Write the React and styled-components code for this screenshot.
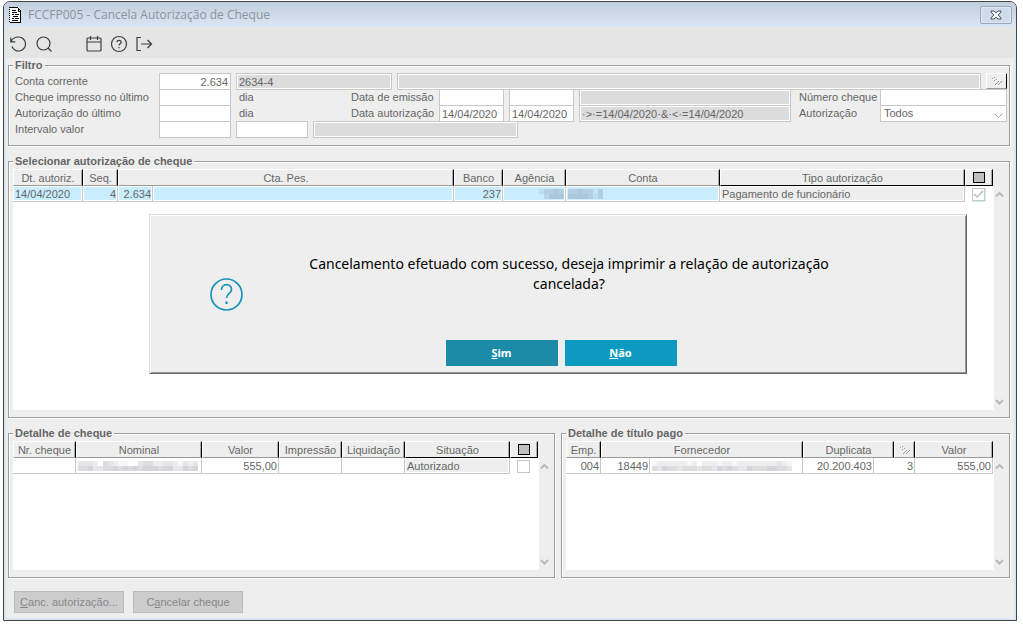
import React from "react";
import styled, { createGlobalStyle } from "styled-components";

const GlobalStyle = createGlobalStyle`
  * {
    box-sizing: border-box;
  }
  body {
    margin: 0;
    background: #fff;
    color: #666;
    font: 11px/13px "Liberation Sans", Arial, sans-serif;
  }
  button, input, select {
    font: inherit;
    color: inherit;
  }
`;

const Page = styled.div`
  padding: 1px 6px 7px 3px;
`;

const Window = styled.main`
  position: relative;
  border: 1px solid #444;
  border-radius: 7px 7px 0 0;
  background: #dae6f2;
  padding-bottom: 2px;
  overflow: hidden;
`;

const TitleBar = styled.header`
  display: flex;
  align-items: center;
  height: 25px;
  padding: 0 4px 0 5px;
  background: linear-gradient(#c0cddb, #dae6f3);
`;

const Title = styled.h1`
  flex: 1;
  margin: 0 0 0 6px;
  color: #8d949c;
  font: 12px/16px "Open Sans", "Segoe UI", sans-serif;
`;

const CloseButton = styled.button`
  display: flex;
  align-items: center;
  justify-content: center;
  width: 32px;
  height: 18px;
  padding: 0;
  border: 1px solid #9ba8b8;
  border-radius: 2px;
  background: #cfdbe8;
  box-shadow: inset 0 0 0 1px #dfe8f2;
`;

const Toolbar = styled.nav`
  display: flex;
  align-items: center;
  gap: 7px;
  height: 31px;
  margin: 0 2px;
  padding: 3px 4px 0;
  background: #e5e5e5;
`;

const ToolButton = styled.button`
  display: flex;
  width: 18px;
  height: 18px;
  padding: 0;
  border: 0;
  background: none;
  color: #3c3c3c;
`;

const ToolGap = styled.span`
  width: 18px;
`;

const Body = styled.div`
  margin: 0 2px;
  padding: 1px 4px 5px 2px;
  background: #eee;
`;

const Group = styled.fieldset`
  min-width: 0;
  margin: 0 0 ${(p) => p.$after || "0"};
  padding: ${(p) => p.$pad};
  border: 1px solid #9c9c9c;
  box-shadow: 1px 1px 0 #fff, inset 1px 1px 0 #fff;
`;

const Legend = styled.legend`
  padding: 0 2px;
  background: #eee;
  font-weight: bold;
  line-height: 13px;
`;

const FilterRow = styled.div`
  display: flex;
  gap: 5px;
  height: 16px;
`;

const Label = styled.label`
  flex: none;
  width: ${(p) => p.$w};
  margin-right: -5px;
  padding-left: ${(p) => p.$indent || "0"};
  line-height: 17px;
  white-space: nowrap;
`;

const Unit = styled.span`
  flex: none;
  width: 110px;
  padding-left: 3px;
  line-height: 17px;
`;

const Field = styled.input`
  flex: ${(p) => (p.$w ? "none" : "1")};
  width: ${(p) => p.$w || "0"};
  min-width: 0;
  height: 17px;
  padding: 1px 2px 0;
  border: 1px solid #c8c8c8;
  border-radius: 0;
  outline: 0;
  background: ${(p) => (p.readOnly ? "#dcdcdc" : "#fff")};
  box-shadow: ${(p) => (p.readOnly ? "inset 0 0 0 1px #fff" : "none")};
  text-align: ${(p) => p.$align || "left"};
`;

const SelectWrap = styled.span`
  position: relative;
  flex: none;
  width: 127px;
  height: 17px;

  svg {
    position: absolute;
    right: 4px;
    top: 8px;
    pointer-events: none;
  }
`;

const Select = styled.select`
  width: 100%;
  height: 17px;
  padding: 0 3px;
  border: 1px solid #c8c8c8;
  border-radius: 0;
  appearance: none;
  background: #fff;
`;

const BrushButton = styled.button`
  flex: none;
  display: flex;
  align-items: center;
  justify-content: center;
  width: 21px;
  height: 16px;
  padding: 0;
  border: 1px solid;
  border-color: #fff #000 #999 #fff;
  background: #eee;
`;

const Grid = styled.div`
  display: flex;
  min-height: ${(p) => p.$h};
`;

const Sheet = styled.div`
  flex: 1;
  min-width: 0;
  padding-right: 1px;
  background: linear-gradient(#eee 17px, #fff 17px);
`;

const Table = styled.table`
  width: 100%;
  table-layout: fixed;
  border-collapse: separate;
  border-spacing: 0;
`;

const Th = styled.th`
  height: 17px;
  padding: 1px 0 0;
  border: 1px solid;
  border-color: #fff #000 ${(p) => (p.$dark ? "#000" : "#999")} #fff;
  background: #eee;
  box-shadow: inset -1px 0 0 #aaa;
  font-weight: normal;
  line-height: 14px;
  text-align: center;
  white-space: nowrap;

  svg {
    display: block;
    margin: 0 auto;
  }
`;

const tones = {
  plain: "#fff",
  selected: "#c8eefe",
  locked: "#eee",
};

const Td = styled.td`
  height: 16px;
  padding: 0 1px 0 2px;
  border-right: 1px solid #c8c8c8;
  border-bottom: 1px solid #c8c8c8;
  background: ${(p) => tones[p.$tone || "plain"]};
  box-shadow: inset 0 0 0 1px #fff;
  line-height: 14px;
  text-align: ${(p) => p.$align || "left"};
  white-space: nowrap;

  svg {
    display: block;
    margin-left: ${(p) => (p.$align === "right" ? "auto" : "0")};
  }
`;

const CheckCell = styled.td`
  padding: 0 2px 0 0;
  line-height: 0;
  text-align: center;
`;

const Check = styled.input`
  width: 13px;
  height: 13px;
  margin: 0;
  border: 1px solid #c8c8c8;
  appearance: none;
  background: #fff;
  vertical-align: top;

  &:checked {
    background: #fff
      url("data:image/svg+xml,%3Csvg xmlns='http://www.w3.org/2000/svg' width='11' height='11' fill='none' stroke='%23bbb' stroke-width='1.5'%3E%3Cpath d='M1 5l3 3 6-6'/%3E%3C/svg%3E");
    box-shadow: 0 1px 0 #c8eefe, 1px 0 0 #c8eefe;
  }
`;

const ScrollTrack = styled.div`
  display: flex;
  flex: none;
  flex-direction: column;
  justify-content: space-between;
  width: 12px;
  padding: 22px 1px 4px;
`;

const Details = styled.div`
  display: grid;
  grid-template-columns: 547fr 449fr;
  gap: 6px;
`;

const Footer = styled.footer`
  display: flex;
  gap: 9px;
  padding: 13px 6px 0;
`;

const FooterButton = styled.button`
  width: 110px;
  height: 22px;
  padding: 0;
  border: 1px solid #bbb;
  background: #ccc;
  color: #888;
`;

const Dialog = styled.section`
  position: absolute;
  top: 212px;
  left: 145px;
  right: 49px;
  min-height: 160px;
  border: 1px solid;
  border-color: #ddd #666 #666 #ddd;
  background: #eee;
  box-shadow: inset 1px 1px 0 #fff, inset -1px -1px 0 #999;
`;

const DialogBody = styled.div`
  display: grid;
  grid-template-columns: 153px 1fr;
  min-height: 125px;
  padding-right: 131px;

  svg {
    margin: 63px auto 0;
  }
`;

const Message = styled.p`
  margin: 39px 0 0;
  color: #000;
  font: 14px/20px "Noto Sans", "Segoe UI", sans-serif;
  text-align: center;
`;

const DialogActions = styled.div`
  display: flex;
  justify-content: center;
  gap: 7px;
  padding-left: 6px;
`;

const DialogButton = styled.button`
  width: 112px;
  height: 26px;
  padding: 0;
  border: 0;
  background: ${(p) => (p.$primary ? "#1c8ba8" : "#0d9ac0")};
  color: #fff;
  font: bold 11px/16px "Noto Sans", "Segoe UI", sans-serif;
`;

const ToolIcon = ({ children }) => (
  <svg width="18" height="18" viewBox="0 0 18 18" fill="none" stroke="currentColor" strokeWidth="1.2">
    {children}
  </svg>
);

const DocumentIcon = () => (
  <svg width="13" height="16" viewBox="0 0 13 16" shapeRendering="crispEdges">
    <path d="M1 0h8l3 3v12H1z" fill="#fff" />
    <path d="M0 0h1v1H0zM0 2h1v1H0zM0 4h1v1H0zM0 6h1v1H0zM0 8h1v1H0zM0 10h1v1H0zM0 12h1v1H0zM0 14h1v1H0zM1 0h8v1H1zM9 1h1v3H9zM10 2h1v1h-1zM11 3h1v12h-1zM1 15h11v1H1zM9 4h3v1H9z" fill="#000" />
    <path d="M3 3h4v1H3zM3 5h5v1H3zM3 7h2v1H3zM6 7h4v1H6zM4 9h5v1H4zM3 11h2v1H3zM6 11h4v1H6zM3 13h6v1H3z" fill="#000" />
  </svg>
);

const CloseIcon = () => (
  <svg width="12" height="10" viewBox="0 0 12 10">
    <path d="M1 1h3l2 1.800L8 1h3v1L8.200 5 11 8v1H8L6 7.200 4 9H1V8l2.800-3L1 2z" fill="#f4f7fa" stroke="#4a5058" />
  </svg>
);

const BrushIcon = () => (
  <svg width="10" height="9" viewBox="0 0 10 9" shapeRendering="crispEdges">
    <path d="M0 1h1v1H0zM2 0h1v1H2zM2 3h1v1H2zM4 2h1v1H4zM6 4h1v1H6zM5 5h1v1H5zM4 6h1v1H4zM3 7h1v1H3zM9 4h1v1H9zM8 5h1v1H8zM7 6h1v1H7zM6 7h1v1H6z" fill="#999" />
  </svg>
);

const MarkIcon = () => (
  <svg width="13" height="12" viewBox="0 0 13 12" shapeRendering="crispEdges">
    <path d="M0 0h12v11H0z" fill="#000" />
    <path d="M1 1h10v9H1z" fill="#c0c0c0" />
  </svg>
);

const Arrow = ({ down }) => (
  <svg width="9" height="7" viewBox="0 0 9 7" fill="none" stroke="#bbb" strokeWidth="2">
    <path d={down ? "M1 1l3.500 3.500L8 1" : "M1 5.500L4.500 2 8 5.500"} />
  </svg>
);

const QuestionIcon = () => (
  <svg width="33" height="33" viewBox="0 0 33 33" fill="none" stroke="#1593bb" strokeWidth="1.700">
    <circle cx="16.500" cy="16.500" r="15.500" />
    <path d="M11.500 12c0-3.300 2.200-5.300 5-5.300s5 1.900 5 4.700c0 4.300-5 4.200-5 8.600" />
    <path d="M16.500 23.500v2.500" strokeWidth="2.200" />
  </svg>
);

// two rows of grey blocks that hide a private value
const Mosaic = ({ rows, size = 5 }) => (
  <svg width={rows[0].length * size} height={rows.length * size} shapeRendering="crispEdges">
    {rows.map((row, y) =>
      row.split("").map((level, x) => (
        <rect
          key={`${x}-${y}`}
          x={x * size}
          y={y * size}
          width={size}
          height={size}
          fill="#556"
          fillOpacity={Number(level) / 20}
        />
      ))
    )}
  </svg>
);

const Scroll = () => (
  <ScrollTrack>
    <Arrow />
    <Arrow down />
  </ScrollTrack>
);

const Cols = ({ widths }) => (
  <colgroup>
    {widths.map((width, i) => (
      <col key={i} width={width} />
    ))}
  </colgroup>
);

const Filter = () => (
  <Group $pad="1px 2px 8px 4px" $after="9px">
    <Legend>Filtro</Legend>
    <FilterRow>
      <Label $w="146px" $indent="2px" htmlFor="conta">Conta corrente</Label>
      <Field $w="72px" $align="right" id="conta" defaultValue="2.634" />
      <Field $w="156px" readOnly aria-label="Número da conta" value="2634-4" />
      <Field readOnly aria-label="Descrição da conta" value="" />
      <BrushButton aria-label="Limpar"><BrushIcon /></BrushButton>
    </FilterRow>
    <FilterRow>
      <Label $w="146px" $indent="2px" htmlFor="impresso">Cheque impresso no último</Label>
      <Field $w="72px" id="impresso" />
      <Unit>dia</Unit>
      <Label $w="88px" htmlFor="emissao">Data de emissão</Label>
      <Field $w="65px" id="emissao" />
      <Field $w="65px" aria-label="Data de emissão final" />
      <Field readOnly aria-label="Critério de emissão" value="" />
      <Label $w="84px" $indent="3px" htmlFor="numero">Número cheque</Label>
      <Field $w="127px" id="numero" />
    </FilterRow>
    <FilterRow>
      <Label $w="146px" $indent="2px" htmlFor="ultimo">Autorização do último</Label>
      <Field $w="72px" id="ultimo" />
      <Unit>dia</Unit>
      <Label $w="88px" htmlFor="autorizacao">Data autorização</Label>
      <Field $w="65px" id="autorizacao" defaultValue="14/04/2020" />
      <Field $w="65px" aria-label="Data autorização final" defaultValue="14/04/2020" />
      <Field readOnly aria-label="Critério de autorização" value="·>·=14/04/2020·&·<·=14/04/2020" />
      <Label $w="84px" $indent="3px" htmlFor="tipo">Autorização</Label>
      <SelectWrap>
        <Select id="tipo"><option>Todos</option></Select>
        <svg width="9" height="6" viewBox="0 0 9 6" fill="none" stroke="#aaa">
          <path d="M0.500 0.500l4 4 4-4" />
        </svg>
      </SelectWrap>
    </FilterRow>
    <FilterRow>
      <Label $w="146px" $indent="2px" htmlFor="valor">Intervalo valor</Label>
      <Field $w="72px" id="valor" />
      <Field $w="72px" aria-label="Valor final" />
      <Field $w="205px" readOnly aria-label="Critério de valor" value="" />
    </FilterRow>
  </Group>
);

const Authorizations = () => (
  <Group $pad="1px 3px 7px 4px" $after="9px">
    <Legend>Selecionar autorização de cheque</Legend>
    <Grid $h="241px">
      <Sheet>
        <Table>
          <Cols widths={[70, 35, 35, undefined, 49, 63, 154, 245, 28]} />
          <thead>
            <tr>
              <Th>Dt. autoriz.</Th>
              <Th>Seq.</Th>
              <Th colSpan={2}>Cta. Pes.</Th>
              <Th>Banco</Th>
              <Th>Agência</Th>
              <Th>Conta</Th>
              <Th $dark>Tipo autorização</Th>
              <Th $dark aria-label="Marcar"><MarkIcon /></Th>
            </tr>
          </thead>
          <tbody>
            <tr>
              <Td $tone="selected">14/04/2020</Td>
              <Td $tone="selected" $align="right">4</Td>
              <Td $tone="selected" $align="right">2.634</Td>
              <Td $tone="selected" />
              <Td $tone="selected" $align="right">237</Td>
              <Td $tone="selected" $align="right"><Mosaic rows={["24454", "03555"]} /></Td>
              <Td $tone="selected"><Mosaic rows={["4454414", "5555424"]} /></Td>
              <Td $tone="locked">Pagamento de funcionário</Td>
              <CheckCell><Check type="checkbox" defaultChecked aria-label="Marcar autorização" /></CheckCell>
            </tr>
          </tbody>
        </Table>
      </Sheet>
      <Scroll />
    </Grid>
  </Group>
);

const ChequeDetail = () => (
  <Group $pad="1px 3px 7px 4px">
    <Legend>Detalhe de cheque</Legend>
    <Grid $h="129px">
      <Sheet>
        <Table>
          <Cols widths={[63, undefined, 77, 63, 63, 105, 28]} />
          <thead>
            <tr>
              <Th>Nr. cheque</Th>
              <Th>Nominal</Th>
              <Th>Valor</Th>
              <Th>Impressão</Th>
              <Th>Liquidação</Th>
              <Th $dark>Situação</Th>
              <Th $dark aria-label="Marcar"><MarkIcon /></Th>
            </tr>
          </thead>
          <tbody>
            <tr>
              <Td />
              <Td><Mosaic rows={["333204321100344223321323", "445334454545455545533545"]} /></Td>
              <Td $align="right">555,00</Td>
              <Td />
              <Td />
              <Td $tone="locked">Autorizado</Td>
              <CheckCell><Check type="checkbox" aria-label="Marcar cheque" /></CheckCell>
            </tr>
          </tbody>
        </Table>
      </Sheet>
      <Scroll />
    </Grid>
  </Group>
);

const TituloDetail = () => (
  <Group $pad="1px 3px 7px 4px">
    <Legend>Detalhe de título pago</Legend>
    <Grid $h="129px">
      <Sheet>
        <Table>
          <Cols widths={[35, 49, undefined, 71, 20, 21, 78]} />
          <thead>
            <tr>
              <Th>Emp.</Th>
              <Th colSpan={2}>Fornecedor</Th>
              <Th colSpan={2}>Duplicata</Th>
              <Th aria-label="Parcela"><BrushIcon /></Th>
              <Th>Valor</Th>
            </tr>
          </thead>
          <tbody>
            <tr>
              <Td $align="right">004</Td>
              <Td $align="right">18449</Td>
              <Td><Mosaic rows={["1222222120222122122222222321", "4354434443443545433544455443"]} /></Td>
              <Td $align="right">20.200.403</Td>
              <Td $align="right" colSpan={2}>3</Td>
              <Td $align="right">555,00</Td>
            </tr>
          </tbody>
        </Table>
      </Sheet>
      <Scroll />
    </Grid>
  </Group>
);

const Confirm = () => (
  <Dialog role="dialog" aria-labelledby="mensagem">
    <DialogBody>
      <QuestionIcon />
      <Message id="mensagem">
        Cancelamento efetuado com sucesso, deseja imprimir a relação de autorização cancelada?
      </Message>
    </DialogBody>
    <DialogActions>
      <DialogButton $primary><u>S</u>im</DialogButton>
      <DialogButton><u>N</u>ão</DialogButton>
    </DialogActions>
  </Dialog>
);

const App = () => (
  <Page>
    <GlobalStyle />
    <Window>
      <TitleBar>
        <DocumentIcon />
        <Title>FCCFP005 - Cancela Autorização de Cheque</Title>
        <CloseButton aria-label="Fechar"><CloseIcon /></CloseButton>
      </TitleBar>
      <Toolbar>
        <ToolButton aria-label="Desfazer">
          <ToolIcon><path d="M0.800 2.500v4.300h4.500M1 6.500C2.500 3.500 5.500 2 8.500 2a7 7 0 1 1-6.500 9.500" /></ToolIcon>
        </ToolButton>
        <ToolButton aria-label="Pesquisar">
          <ToolIcon><circle cx="8.500" cy="8.500" r="6.500" /><path d="M13 13l3.500 3.500" /></ToolIcon>
        </ToolButton>
        <ToolGap />
        <ToolButton aria-label="Calendário">
          <ToolIcon>
            <rect x="2" y="3" width="14" height="13" rx="1" />
            <path d="M2 7h14M5.500 1v4M12.500 1v4" />
          </ToolIcon>
        </ToolButton>
        <ToolButton aria-label="Ajuda">
          <ToolIcon>
            <circle cx="9" cy="9" r="7.500" />
            <path d="M6.800 7.200C7 5.900 7.900 5.300 9 5.300c1.300 0 2.200.8 2.200 1.900C11.200 8.800 9 8.800 9 10.500M9 12v1.300" />
          </ToolIcon>
        </ToolButton>
        <ToolButton aria-label="Sair">
          <ToolIcon><path d="M6 2.500H2v13h4M6 9h10.500M12.500 5L16.500 9l-4 4" /></ToolIcon>
        </ToolButton>
      </Toolbar>
      <Body>
        <Filter />
        <Authorizations />
        <Details>
          <ChequeDetail />
          <TituloDetail />
        </Details>
        <Footer>
          <FooterButton disabled><u>C</u>anc. autorização...</FooterButton>
          <FooterButton disabled>C<u>a</u>ncelar cheque</FooterButton>
        </Footer>
      </Body>
      <Confirm />
    </Window>
  </Page>
);

export default App;
